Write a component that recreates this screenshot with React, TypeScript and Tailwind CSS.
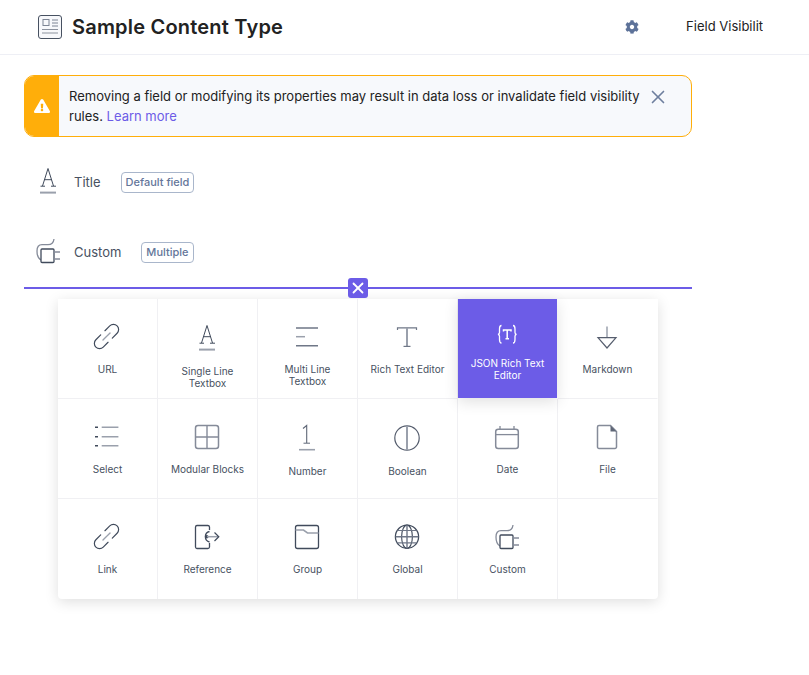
import React from 'react';
import { X } from 'lucide-react';
import { FaCog, FaExclamationTriangle } from 'react-icons/fa';

const DARK = '#414b5c';
const GRAY = '#9aa0ac';

function Icon({ children, className }: { children: React.ReactNode; className?: string }) {
  return (
    <svg width="32" height="32" viewBox="0 0 32 32" fill="none" className={className}>
      {children}
    </svg>
  );
}

function LinkIcon() {
  return (
    <Icon>
      <g transform="translate(15.5 14.5) rotate(-45)" strokeLinecap="round">
        <path d="M-3 -5.2H-9.8A5.2 5.2 0 0 0 -9.8 5.2H-3" stroke={DARK} strokeWidth="1.2" />
        <path d="M3 -5.2H9.8A5.2 5.2 0 0 1 9.8 5.2H3" stroke={DARK} strokeWidth="1.2" />
        <path d="M-5 0H5" stroke={GRAY} strokeWidth="1.3" />
      </g>
    </Icon>
  );
}

function SingleLineIcon() {
  return (
    <Icon>
      <path d="M16 3.5L10.5 21M16 3.5L21.5 21" stroke={DARK} strokeWidth="1" />
      <path d="M8.5 21.2H13M19 21.2H24M12 14.7H20" stroke={DARK} strokeWidth="1" />
      <path d="M8 27.6H24" stroke={GRAY} strokeWidth="2" />
    </Icon>
  );
}

function MultiLineIcon() {
  return (
    <Icon>
      <path d="M5 6H27M5 23.7H27" stroke="#6f7787" strokeWidth="1.5" />
      <path d="M5 14.7H14" stroke={GRAY} strokeWidth="1.5" />
    </Icon>
  );
}

function RichTextIcon() {
  return (
    <Icon>
      <path d="M6.5 8V5.8H25.5V8" stroke="#6f7787" strokeWidth="1.2" />
      <path d="M16 6V24" stroke={GRAY} strokeWidth="2" />
      <path d="M12.5 24.4H19.5" stroke="#6f7787" strokeWidth="1.2" />
    </Icon>
  );
}

function JsonIcon() {
  return (
    <Icon>
      <path d="M10.5 3.5C8.5 3.5 8.5 5 8.5 7V10.5C8.5 11.5 8 12.2 7 12.4C8 12.6 8.5 13.3 8.5 14.3V17.5C8.5 19.5 8.5 21 10.5 21" stroke="#fff" strokeWidth="1.3" />
      <path d="M22 3.5C24 3.5 24 5 24 7V10.5C24 11.5 24.5 12.2 25.5 12.4C24.5 12.6 24 13.3 24 14.3V17.5C24 19.5 24 21 22 21" stroke="#fff" strokeWidth="1.3" />
      <path d="M12.5 9.5V8H20V9.5M16.2 8V16.8M14.5 16.8H18" stroke="#fff" strokeWidth="1.5" />
    </Icon>
  );
}

function MarkdownIcon() {
  return (
    <Icon>
      <path d="M16 4.5V15.7" stroke={GRAY} strokeWidth="1.5" />
      <path d="M7 15.7H25L16 26Z" stroke="#565e6e" strokeWidth="1.2" />
    </Icon>
  );
}

function SelectIcon() {
  return (
    <Icon>
      <path d="M4 5.3H7M4 14.7H7M4 23.7H7" stroke={DARK} strokeWidth="1.5" />
      <path d="M10.7 5.3H27.4M10.7 14.7H27.4M10.7 23.7H27.4" stroke={GRAY} strokeWidth="1.4" />
    </Icon>
  );
}

function ModularIcon() {
  return (
    <Icon>
      <rect x="4.5" y="3.5" width="23" height="23" rx="2.5" stroke="#858b99" strokeWidth="1.5" />
      <path d="M16 3.5V26.5M4.5 15H27.5" stroke="#858b99" strokeWidth="1.4" />
    </Icon>
  );
}

function NumberIcon() {
  return (
    <Icon>
      <path d="M12 6.5L15.7 3.5V21" stroke="#5f6777" strokeWidth="1.1" />
      <path d="M12.5 21.2H19" stroke="#5f6777" strokeWidth="1" />
      <path d="M8 27.7H24" stroke={GRAY} strokeWidth="1.6" />
    </Icon>
  );
}

function BooleanIcon() {
  return (
    <Icon>
      <circle cx="16" cy="16" r="12.2" stroke="#565e6e" strokeWidth="1.2" />
      <path d="M16 4V28" stroke={GRAY} strokeWidth="2" />
    </Icon>
  );
}

function DateIcon() {
  return (
    <Icon>
      <rect x="4.7" y="7.3" width="22.6" height="19.2" rx="2.5" stroke="#858b99" strokeWidth="1.5" />
      <path d="M4.7 12.6H27.3" stroke="#858b99" strokeWidth="1.3" />
      <path d="M9 4V7.3M23 4V7.3" stroke="#858b99" strokeWidth="1.3" />
    </Icon>
  );
}

function FileIcon() {
  return (
    <Icon>
      <path d="M19.5 3.5H8A1.5 1.5 0 0 0 6.5 5V25A1.5 1.5 0 0 0 8 26.5H24A1.5 1.5 0 0 0 25.5 25V9.5Z" stroke="#858b99" strokeWidth="1.5" />
      <path d="M19.5 3.5L25.5 9.5H19.5Z" fill="#5f6777" />
    </Icon>
  );
}

function ReferenceIcon() {
  return (
    <Icon>
      <path d="M18.5 8V5A1.7 1.7 0 0 0 16.8 3.5H6A1.7 1.7 0 0 0 4.5 5V25A1.7 1.7 0 0 0 6 26.5H16.8A1.7 1.7 0 0 0 18.5 25V21" stroke={DARK} strokeWidth="1.3" />
      <path d="M18.5 9.5A5.4 5.4 0 0 0 18.5 20" stroke={DARK} strokeWidth="1.3" />
      <circle cx="15.7" cy="14.7" r="1.8" fill={DARK} />
      <path d="M16 14.7H27" stroke={GRAY} strokeWidth="1.5" />
      <path d="M23.5 10.5L27.8 14.7L23.5 19" stroke={DARK} strokeWidth="1.2" />
    </Icon>
  );
}

function GroupIcon() {
  return (
    <Icon>
      <rect x="4.5" y="3.5" width="23" height="23" rx="2" stroke={DARK} strokeWidth="1.3" />
      <path d="M4.5 8H12.5L16.5 11H27.5" stroke={GRAY} strokeWidth="1.6" />
    </Icon>
  );
}

function GlobalIcon() {
  return (
    <Icon>
      <circle cx="16" cy="14.7" r="11.6" stroke={DARK} strokeWidth="1.3" />
      <ellipse cx="16" cy="14.7" rx="5.4" ry="11.6" stroke={DARK} strokeWidth="1.1" />
      <path d="M16 3V26.4M4.6 14.7H27.4" stroke="#6f7787" strokeWidth="1.4" />
      <path d="M6.5 8.5H25.5M6.5 20.9H25.5" stroke="#6f7787" strokeWidth="1.2" />
    </Icon>
  );
}

function CustomIcon() {
  return (
    <Icon>
      <path d="M22 3C21.5 7 19.5 8.7 16 8.7H10C6.5 8.7 5 11.5 5 15C5 19 6 22.5 9 24" stroke="#858b99" strokeWidth="1.3" />
      <rect x="9" y="13" width="13" height="13.5" rx="1" fill="#fff" stroke={DARK} strokeWidth="1.3" />
      <path d="M22 16H28M22 23H28" stroke="#858b99" strokeWidth="1.4" />
    </Icon>
  );
}

function ContentTypeIcon() {
  return (
    <svg width="24" height="24" viewBox="0 0 24 24" fill="none" className="shrink-0">
      <rect x="0.5" y="0.5" width="23" height="23" rx="2.5" fill="#f7f8fb" stroke="#475161" />
      <rect x="5" y="4.5" width="6" height="6" stroke="#7c8494" />
      <path d="M14 5H20M14 8H20M14 11H20" stroke="#7c8494" />
      <path d="M4 14.5H20M4 18H20" stroke="#8b919e" strokeWidth="1.2" />
    </svg>
  );
}

const FIELDS = [
  { label: ['URL'], icon: <LinkIcon />, gap: 'mt-[9px]' },
  { label: ['Single Line', 'Textbox'], icon: <SingleLineIcon />, gap: 'mt-[11px]' },
  { label: ['Multi Line', 'Textbox'], icon: <MultiLineIcon />, gap: 'mt-[9px]' },
  { label: ['Rich Text Editor'], icon: <RichTextIcon />, gap: 'mt-[9px]' },
  { label: ['JSON Rich Text', 'Editor'], icon: <JsonIcon />, gap: 'mt-[3px]', active: true },
  { label: ['Markdown'], icon: <MarkdownIcon />, gap: 'mt-[9px]' },
  { label: ['Select'], icon: <SelectIcon />, gap: 'mt-[9px]' },
  { label: ['Modular Blocks'], icon: <ModularIcon />, gap: 'mt-[9px]' },
  { label: ['Number'], icon: <NumberIcon />, gap: 'mt-[11px]' },
  { label: ['Boolean'], icon: <BooleanIcon />, gap: 'mt-[11px]' },
  { label: ['Date'], icon: <DateIcon />, gap: 'mt-[9px]' },
  { label: ['File'], icon: <FileIcon />, gap: 'mt-[9px]' },
  { label: ['Link'], icon: <LinkIcon />, gap: 'mt-[9px]' },
  { label: ['Reference'], icon: <ReferenceIcon />, gap: 'mt-[9px]' },
  { label: ['Group'], icon: <GroupIcon />, gap: 'mt-[9px]' },
  { label: ['Global'], icon: <GlobalIcon />, gap: 'mt-[9px]' },
  { label: ['Custom'], icon: <CustomIcon />, gap: 'mt-[9px]' },
  { label: [], icon: null, gap: '' },
];

function Badge({ children }: { children: React.ReactNode }) {
  return (
    <span className="flex h-[21px] items-center rounded-[4px] border border-[#a9b6cb] px-1 text-[11px] font-medium text-[#64769a]">
      {children}
    </span>
  );
}

export default function App() {
  return (
    <div className="min-h-[675px] bg-white font-['Inter',sans-serif] text-[#222222]">
      <header className="flex h-[55px] items-center border-b border-[#eeeff5] pl-[38px]">
        <ContentTypeIcon />
        <h1 className="ml-[10px] text-xl font-semibold tracking-[0.2px]">Sample Content Type</h1>
        <FaCog className="ml-[342px] text-[#5d7299]" size={14} />
        <div className="ml-[47px] w-[77px] overflow-hidden whitespace-nowrap text-[13px]">Field Visibility</div>
      </header>

      <div className="mt-5 ml-6 flex h-[62px] w-[668px] overflow-hidden rounded-[10px] border border-[#ffae0a] bg-[#f7f9fc]">
        <div className="flex w-[34px] shrink-0 items-center justify-center bg-[#ffae0a]">
          <FaExclamationTriangle className="text-white" size={16} />
        </div>
        <p className="mt-[10px] ml-[10px] w-[576px] text-[13px] leading-[20px]">
          Removing a field or modifying its properties may result in data loss or invalidate field visibility rules.{' '}
          <span className="text-[#6c5ce7]">Learn more</span>
        </p>
        <X className="mt-[10px] ml-[2px] shrink-0 text-[#6e7f9e]" size={22} strokeWidth={1.8} />
      </div>

      <div className="mt-[29px] ml-8 flex h-8 items-center">
        <div className="-translate-y-px">
          <SingleLineIcon />
        </div>
        <span className="mt-[2px] ml-[10px] text-[13px] text-[#475161]">Title</span>
        <span className="ml-5">
          <Badge>Default field</Badge>
        </span>
      </div>

      <div className="mt-[38px] ml-8 flex h-8 items-center">
        <CustomIcon />
        <span className="mt-[2px] ml-[10px] text-[13px] text-[#475161]">Custom</span>
        <span className="ml-5">
          <Badge>Multiple</Badge>
        </span>
      </div>

      <div className="relative mt-[19px] ml-6 h-[2px] w-[668px] bg-[#6c5ce7]">
        <button className="absolute top-[-9px] left-[324px] flex h-5 w-5 items-center justify-center rounded-[3px] bg-[#6c5ce7] text-white">
          <X size={18} strokeWidth={2.4} />
        </button>
      </div>

      <div className="mt-[10px] ml-[58px] grid w-[600px] grid-cols-6 rounded-b-[4px] bg-white shadow-[0_3px_14px_rgba(0,0,0,0.13)]">
        {FIELDS.map((field, index) => (
          <div
            key={index}
            className={
              'flex flex-col items-center pt-[23px] text-center ' +
              (field.active ? '' : index % 6 !== 5 ? 'border-r border-r-[#f0f0f3] ' : 'border-r border-r-transparent ') +
              (index < 12 && !field.active ? 'border-b border-b-[#f0f0f3] ' : '') +
              (field.active
                ? 'relative z-10 mr-px mb-px h-[99px] bg-[#6c5ce7] text-white shadow-[0_4px_14px_rgba(0,0,0,0.12)]'
                : 'h-[100px] text-[#475161]')
            }
          >
            <div className="mr-px h-8 w-8">{field.icon}</div>
            {field.label.length > 0 && (
              <div className={field.gap + ' text-[10px] leading-[12px]'}>
                {field.label.map((line) => (
                  <div key={line}>{line}</div>
                ))}
              </div>
            )}
          </div>
        ))}
      </div>
    </div>
  );
}
